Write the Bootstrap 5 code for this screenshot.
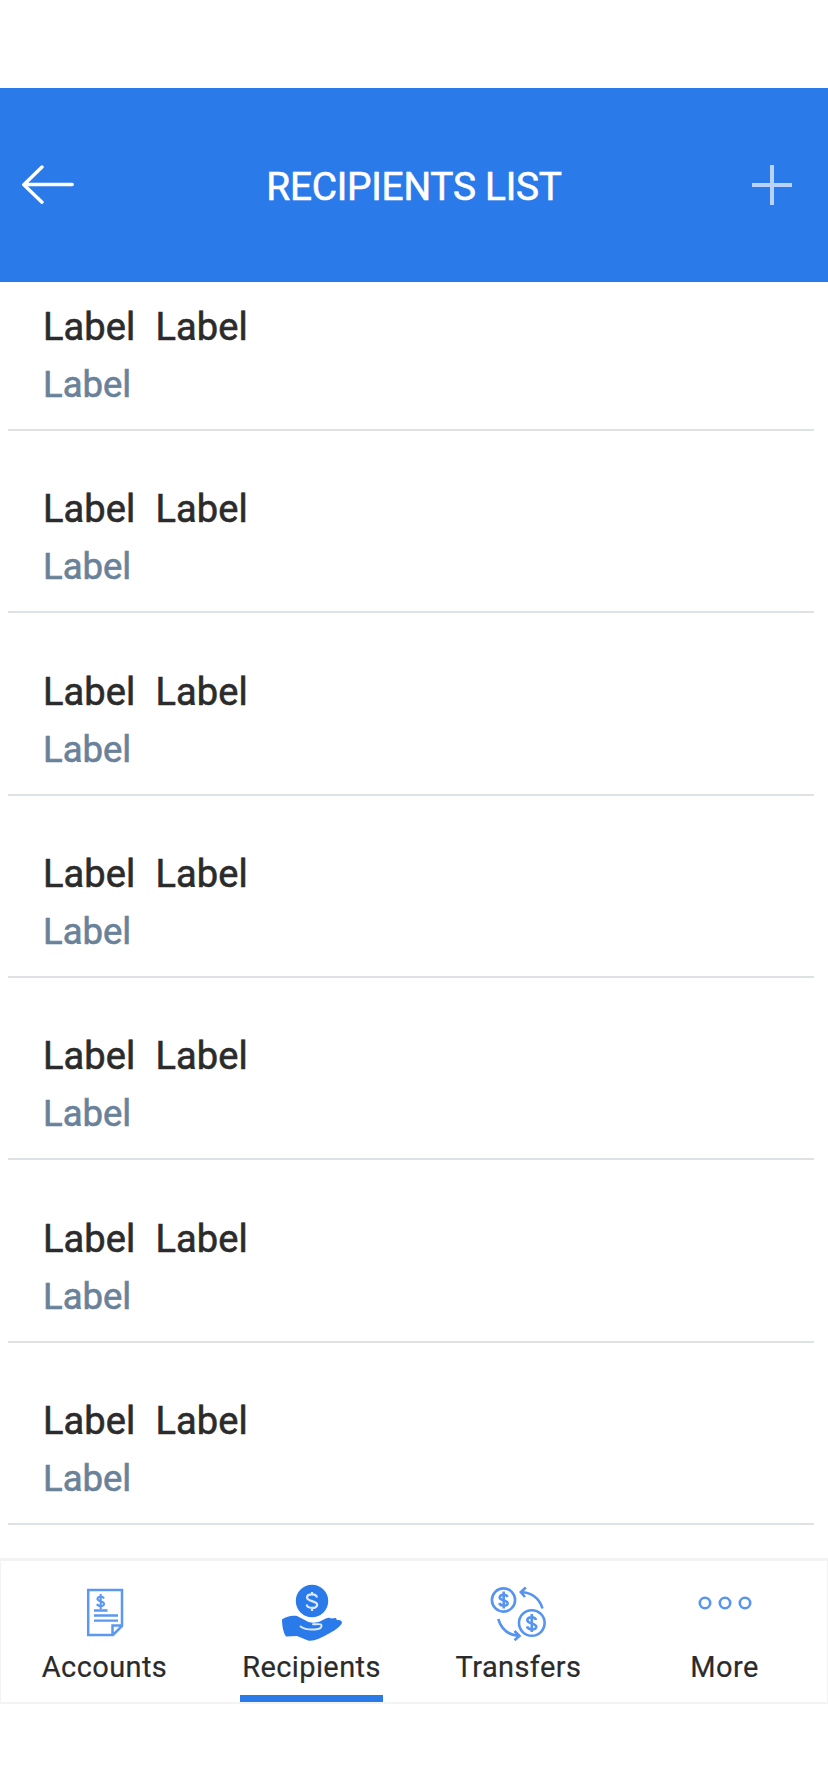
<!DOCTYPE html>
<html lang="en">
<head>
<meta charset="utf-8">
<meta name="viewport" content="width=device-width, initial-scale=1">
<title>Recipients List</title>
<link href="https://cdn.jsdelivr.net/npm/bootstrap@5.3.0/dist/css/bootstrap.min.css" rel="stylesheet">
<style>
  :root { --brand: #2b7aea; --ink: #2b2b2b; --muted: #6a8299; --rule: #dee2e4; }
  body { font-family: Roboto, sans-serif; color: var(--ink); background: #fff; }
  .screen { height: 1792px; padding-top: 88px; overflow: hidden; }
  .app-header { height: 194px; background: var(--brand); padding: 0 36px 0 22px; display: grid; grid-template-columns: 52px 1fr 40px; align-items: center; }
  .app-title { font-size: 38.8px; font-weight: 400; -webkit-text-stroke: .6px; line-height: 46px; letter-spacing: -.25px; padding: 4px 0 0 2px; }
  .icon-btn { border: 0; background: none; padding: 0; line-height: 0; }
  .recipients { height: 1276px; padding: 0 14px 0 8px; }
  .recipient { height: 182.33px; padding: 0 0 22px 35px; border-bottom: 2px solid var(--rule); }
  .recipient:first-child { height: 149px; }
  .person { font-size: 38px; font-weight: 400; -webkit-text-stroke: .6px; line-height: 46px; letter-spacing: .1px; gap: 20px; }
  .account { font-size: 36.5px; font-weight: 400; -webkit-text-stroke: .6px; line-height: 44px; margin-top: 13px; color: var(--muted); }
  .tabs { height: 146px; border: 1px solid #f3f3f3; border-top-width: 3px; border-bottom-width: 2px; display: grid; grid-template-columns: 207px 207px 207px 1fr; }
  .tab { color: var(--ink); text-decoration: none; font-size: 29px; -webkit-text-stroke: .2px; letter-spacing: .4px; line-height: 34px; padding-top: 20px; }
  .tab svg { height: 64px; width: 64px; flex: none; margin-bottom: 5px; }
  .tab-bar { height: 7px; width: 143px; }
  .active .tab-bar { background: var(--brand); }
</style>
</head>
<body>
<div class="screen d-flex flex-column">
  <header class="app-header text-white">
    <button class="icon-btn" aria-label="Back">
      <svg width="52" height="40" viewBox="0 0 52 40" fill="none" stroke="#fff" stroke-width="3.4" stroke-linecap="round" stroke-linejoin="round"><path d="M20 2 1.8 19.8 20 37.2M2 19.5H50.2"/></svg>
    </button>
    <h1 class="app-title text-center m-0">RECIPIENTS LIST</h1>
    <button class="icon-btn" aria-label="Add recipient">
      <svg width="40" height="40" viewBox="0 0 40 40" stroke="#b8d2fa" stroke-width="4"><path d="M20 0V40M0 20H40"/></svg>
    </button>
  </header>

  <main class="recipients flex-shrink-0">
    <div class="recipient d-flex flex-column justify-content-end"><div class="person d-flex"><span>Label</span><span>Label</span></div><div class="account">Label</div></div>
    <div class="recipient d-flex flex-column justify-content-end"><div class="person d-flex"><span>Label</span><span>Label</span></div><div class="account">Label</div></div>
    <div class="recipient d-flex flex-column justify-content-end"><div class="person d-flex"><span>Label</span><span>Label</span></div><div class="account">Label</div></div>
    <div class="recipient d-flex flex-column justify-content-end"><div class="person d-flex"><span>Label</span><span>Label</span></div><div class="account">Label</div></div>
    <div class="recipient d-flex flex-column justify-content-end"><div class="person d-flex"><span>Label</span><span>Label</span></div><div class="account">Label</div></div>
    <div class="recipient d-flex flex-column justify-content-end"><div class="person d-flex"><span>Label</span><span>Label</span></div><div class="account">Label</div></div>
    <div class="recipient d-flex flex-column justify-content-end"><div class="person d-flex"><span>Label</span><span>Label</span></div><div class="account">Label</div></div>
  </main>

  <nav class="tabs flex-shrink-0">
    <a class="tab d-flex flex-column align-items-center" href="#">
      <svg viewBox="0 0 64 64" fill="none" stroke="#5c98f0" stroke-width="2.5">
        <path d="M15.2 9H49V45L40 54H15.2V9ZM49 44.5H39.5V54"/>
        <path d="M21 29.5H34.5M21 34.5H45M21 39.7H45" stroke-width="2.3"/>
        <path d="M31 17.5C30 15 24.5 15.3 24.5 18S31 20 31 23 25 25.5 24 23M27.7 13V28" stroke-width="2.1"/>
      </svg>
      <span>Accounts</span><span class="tab-bar mt-auto"></span>
    </a>
    <a class="tab active d-flex flex-column align-items-center" href="#" aria-current="page">
      <svg viewBox="0 0 64 64" fill="none">
        <circle cx="32" cy="20" r="16.2" fill="#2b7aea"/>
        <path d="M37 16.5C36.3 12.2 27 12.3 27 16.5S37.2 19.5 37.2 23.8 27.2 28 26.7 23.5M32 11V14M32 26.500V30" stroke="#dce9fc" stroke-width="2.2"/>
        <path d="M2 38.5C7 35 12 34.2 17 35L28.500 41C32 42 37 42 41 40C45 38 49 35.500 51 37.500L56 37L57 39.200C60 38.500 62 40 62 42C60 46 54 50 47 53.500C41 57 34 60.500 28 59.500L17 55L6 55.500C3 51 2 44 2 38.500Z" fill="#2b7aea"/>
        <path d="M20.500 45.500C25 48.500 32 49 38 48C41 47.500 42.500 45 41 43.500C39.500 42.500 36 43.500 33 43.300" stroke="#dce9fc" stroke-width="1.9" stroke-linecap="round"/>
      </svg>
      <span>Recipients</span><span class="tab-bar mt-auto"></span>
    </a>
    <a class="tab d-flex flex-column align-items-center" href="#">
      <svg viewBox="0 0 64 64" fill="none" stroke="#5694ef" stroke-width="2.6">
        <circle cx="16.500" cy="19" r="11.600"/><circle cx="44.800" cy="42" r="12.800"/>
        <path d="M20.500 16C19.500 12.700 12.700 13 12.700 16.500S20.700 18.800 20.700 22.300 13.500 25.500 12.300 22M16.700 10.500V27.500M49 39C48 35.200 40.300 35.500 40.300 39.200S49.300 42 49.300 45.800 41 49 40 45.300M44.800 33V51"/>
        <path d="M34.500 11C44 11.500 52.500 17 55.500 27.500M38.800 6.500 33.800 11.200 38 16M11.200 38C14.500 48.500 21.500 54 31.500 55M27.500 50 32.500 55 27.500 59.300"/>
      </svg>
      <span>Transfers</span><span class="tab-bar mt-auto"></span>
    </a>
    <a class="tab d-flex flex-column align-items-center" href="#">
      <svg viewBox="0 0 64 64" fill="none" stroke="#5694ef" stroke-width="2.600"><circle cx="12" cy="22" r="5.200"/><circle cx="32" cy="22" r="5.200"/><circle cx="52" cy="22" r="5.200"/></svg>
      <span>More</span><span class="tab-bar mt-auto"></span>
    </a>
  </nav>
</div>
<script src="https://cdn.jsdelivr.net/npm/bootstrap@5.3.0/dist/js/bootstrap.bundle.min.js"></script>
</body>
</html>
